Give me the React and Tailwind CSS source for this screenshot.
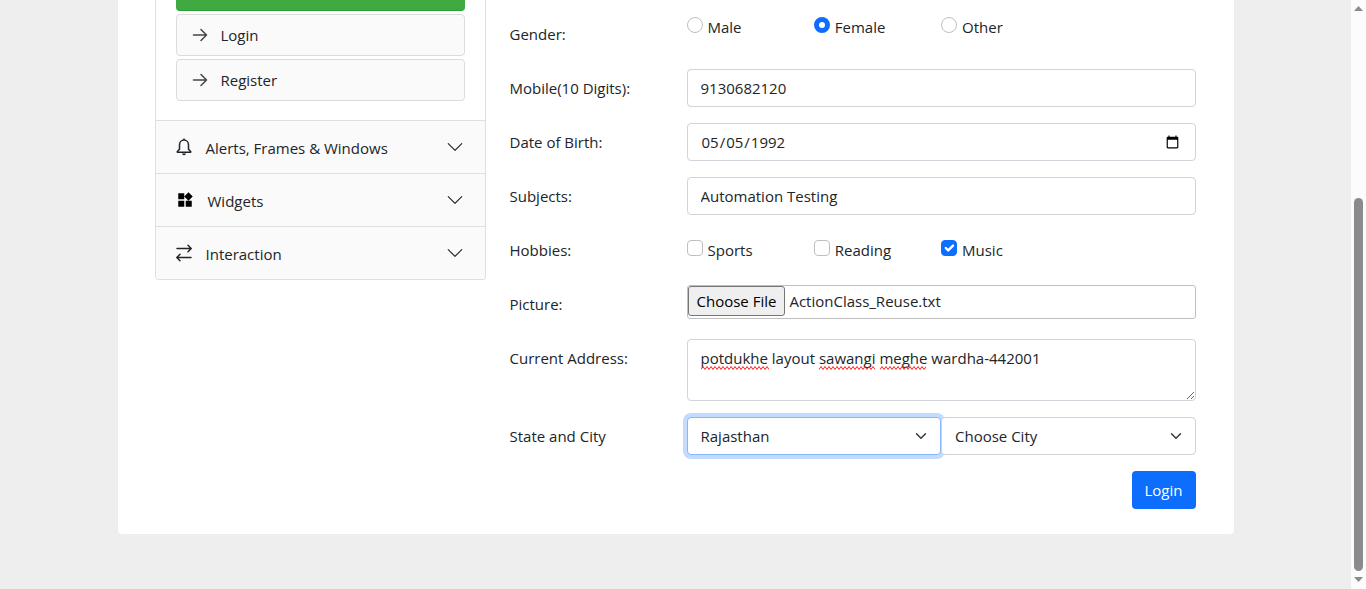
import { useEffect, useRef } from "react";
import { BsChevronDown } from "react-icons/bs";
import { MdWidgets } from "react-icons/md";

function ArrowRight() {
  return (
    <svg width="16" height="16" viewBox="0 0 16 16" fill="none" stroke="#444" strokeWidth="1.5" strokeLinecap="round" strokeLinejoin="round">
      <path d="M1.500 8h13M9 2.500 14.500 8 9 13.500" />
    </svg>
  );
}

function Bell() {
  return (
    <svg width="16" height="18" viewBox="0 0 16 18" fill="none" stroke="currentColor" strokeWidth="1.5" strokeLinejoin="round">
      <path d="M8 .5v1.500M1.300 14.200V13.500L3.500 11.300V6.800a4.500 4.800 0 0 1 9 0v4.500l2.200 2.200v.7Z" />
      <path d="M6 15.500h4a2 1.800 0 0 1-4 0Z" fill="currentColor" stroke="none" />
    </svg>
  );
}

function ArrowsSwap() {
  return (
    <svg width="16" height="18" viewBox="0 0 16 18" fill="none" stroke="currentColor" strokeWidth="1.5" strokeLinecap="round" strokeLinejoin="round">
      <path d="M1 4.500h14M12 1.300l3.200 3.200L12 7.700M15 13.500H1M4 10.300.8 13.500 4 16.700" />
    </svg>
  );
}

const links = ["Login", "Register"];
const sections = [
  { title: "Alerts, Frames & Windows", icon: <Bell /> },
  { title: "Widgets", icon: <MdWidgets className="size-[18px] text-black" /> },
  { title: "Interaction", icon: <ArrowsSwap /> },
];

function Sidebar() {
  return (
    <nav className="w-[331px] shrink-0 self-start overflow-hidden rounded-b border border-t-0 border-[#dfdfdf]">
      <ul className="flex flex-col gap-[3px] px-5 pb-[19px]">
        <li className="h-[11px] rounded-b border-b border-[#28a230] bg-[#41a942]" />
        {links.map((name) => (
          <li key={name}>
            <a
              href={"#" + name.toLowerCase()}
              className="flex h-[42px] items-center gap-[13px] rounded border border-[#dddbdc] bg-[#fafafa] px-[15px]"
            >
              <ArrowRight />
              {name}
            </a>
          </li>
        ))}
      </ul>
      {sections.map((s) => (
        <button
          key={s.title}
          type="button"
          className="flex h-[53px] w-full items-center gap-[14px] border-t border-[#dfdfdf] bg-[#fafafa] pl-5 pr-[21px] text-left"
        >
          {s.icon}
          <span className="flex-1 pt-[2px]">{s.title}</span>
          <BsChevronDown className="size-[18px]" />
        </button>
      ))}
    </nav>
  );
}

const control =
  "w-full rounded border border-[#ced4da] bg-white px-[13px] outline-none";
const row = "grid grid-cols-[177px_minmax(0,1fr)] items-start";
const labelText = "leading-[38px]";

function Row({ label, id, children }) {
  return (
    <div className={row}>
      <label htmlFor={id} className={labelText}>
        {label}
      </label>
      {children}
    </div>
  );
}

function Choices({ legend, type, name, options, selected, className }) {
  return (
    <div role="group" aria-labelledby={name + "-legend"} className={row}>
      <span id={name + "-legend"} className={labelText}>
        {legend}
      </span>
      <div className={"grid grid-cols-4 " + className}>
        {options.map((o) => (
          <label key={o} className="flex items-start gap-[5px] leading-6">
            <input
              type={type}
              name={name}
              defaultChecked={o === selected}
              className={
                type === "radio"
                  ? "mt-[2px] size-4 appearance-none rounded-full border border-[#bfbfbf] bg-white checked:border-[5px] checked:border-[#0d6efd]"
                  : "peer mt-[2px] size-4 appearance-none rounded border border-[#bfbfbf] bg-white checked:border-[#0d6efd] checked:bg-[#0d6efd]"
              }
            />
            {type === "checkbox" && (
              <svg
                viewBox="0 0 20 20"
                className="-ml-[21px] mt-[2px] hidden size-4 peer-checked:block"
                fill="none"
                stroke="#fff"
                strokeWidth="3"
                strokeLinecap="round"
                strokeLinejoin="round"
              >
                <path d="m6 10 3 3 6-6" />
              </svg>
            )}
            {o}
          </label>
        ))}
      </div>
    </div>
  );
}

function SelectBox({ id, label, value, className }) {
  return (
    <div className="relative flex-1">
      <select
        id={id}
        aria-label={label}
        className={"h-[38px] w-full appearance-none rounded border bg-white pl-[13px] pr-9 outline-none " + className}
      >
        <option>{value}</option>
      </select>
      <svg
        viewBox="0 0 16 16"
        className="pointer-events-none absolute right-[14px] top-[13px] size-3"
        fill="none"
        stroke="#343a40"
        strokeWidth="2"
        strokeLinecap="round"
        strokeLinejoin="round"
      >
        <path d="m2 5 6 6 6-6" />
      </svg>
    </div>
  );
}

function Squiggle({ className, width }) {
  let d = "M0 3.5";
  for (let x = 2, up = true; x <= width; x += 2, up = !up) d += `L${x} ${up ? 0.5 : 3.5}`;
  return (
    <svg
      aria-hidden="true"
      width={width}
      height="4"
      className={"pointer-events-none absolute top-[27px] " + className}
      fill="none"
      stroke="#f22"
    >
      <path d={d} />
    </svg>
  );
}

function RegistrationForm() {
  const file = useRef(null);
  useEffect(() => {
    const transfer = new DataTransfer();
    transfer.items.add(new File([""], "ActionClass_Reuse.txt"));
    file.current.files = transfer.files;
  }, []);

  return (
    <form className="flex min-w-0 flex-1 flex-col gap-4 pt-[15px]">
      <Choices legend="Gender:" type="radio" name="gender" options={["Male", "Female", "Other"]} selected="Female" className="" />
      <Row label="Mobile(10 Digits):" id="mobile">
        <input id="mobile" type="text" defaultValue="9130682120" className={control + " h-[38px]"} />
      </Row>
      <Row label="Date of Birth:" id="dob">
        <input id="dob" type="date" defaultValue="1992-05-05" className={control + " h-[38px]"} />
      </Row>
      <Row label="Subjects:" id="subjects">
        <input id="subjects" type="text" defaultValue="Automation Testing" className={control + " h-[38px]"} />
      </Row>
      <Choices legend="Hobbies:" type="checkbox" name="hobbies" options={["Sports", "Reading", "Music"]} selected="Music" className="pt-[7px]" />
      <Row label="Picture:" id="picture">
        <input
          ref={file}
          id="picture"
          type="file"
          className="h-[34px] w-full rounded-[3px] border border-[#bfbfbf] bg-white file:mr-1 file:h-[30px] file:rounded-[3px] file:border file:border-solid file:border-[#767676] file:bg-[#efefef] file:px-2 file:text-black"
        />
      </Row>
      <Row label="Current Address:" id="address">
        <div className="relative flex">
          <textarea
            id="address"
            spellCheck="false"
            defaultValue="potdukhe layout sawangi meghe wardha-442001"
            className={control + " h-[62px] py-[6px] leading-6"}
          />
          <Squiggle width={68} className="left-[14px]" />
          <Squiggle width={56} className="left-[132px]" />
          <Squiggle width={46} className="left-[193px]" />
        </div>
      </Row>
      <Row label="State and City" id="state">
        <div className="flex">
          <SelectBox
            id="state"
            label="State"
            value="Rajasthan"
            className="border-[#86b7fe] ring-4 ring-[#c2dbfe]"
          />
          <SelectBox id="city" label="City" value="Choose City" className="border-[#ced4da]" />
        </div>
      </Row>
      <button type="button" className="h-[38px] self-end rounded bg-[#0d6efd] px-[13px] text-white">
        Login
      </button>
    </form>
  );
}

function Scrollbar() {
  return (
    <div aria-hidden="true" className="flex w-[15px] shrink-0 flex-col items-center bg-[#fcfcfc] pb-[7px] pt-[6px]">
      <svg width="9" height="5" fill="#8b8b8b">
        <path d="M4.500 0 9 5H0Z" />
      </svg>
      <div className="flex-1" />
      <div className="h-[373px] w-[9px] rounded-full bg-[#8b8b8b]" />
      <svg width="9" height="5" fill="#8b8b8b" className="mt-[6px]">
        <path d="M0 0h9L4.500 5Z" />
      </svg>
    </div>
  );
}

export default function App() {
  return (
    <div className="flex min-h-screen bg-[#eee] font-['Open_Sans','Noto_Sans',sans-serif] text-[15px] leading-6 text-[#212529]">
      <div className="min-w-0 flex-1">
        <main className="mx-auto flex max-w-[1116px] gap-6 rounded-b bg-white pb-[25px] pl-[37px] pr-[38px]">
          <Sidebar />
          <RegistrationForm />
        </main>
      </div>
      <Scrollbar />
    </div>
  );
}
